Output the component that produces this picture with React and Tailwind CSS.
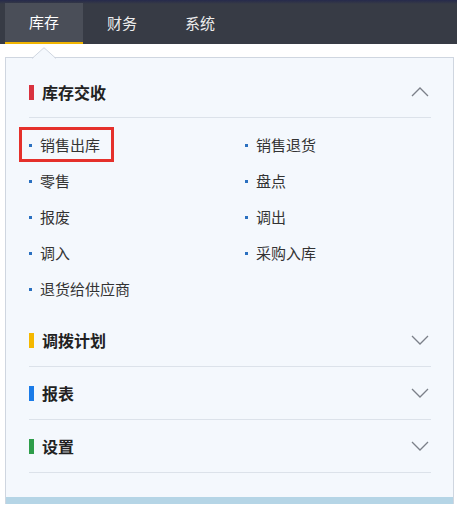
const tabs = ["库存", "财务", "系统"];

const items = [
  "销售出库",
  "销售退货",
  "零售",
  "盘点",
  "报废",
  "调出",
  "调入",
  "采购入库",
  "退货给供应商",
];

const Chevron = ({ up }) => (
  <svg width="18" height="10" viewBox="0 0 18 10" className="ml-auto mr-[2px]">
    <polyline
      points={up ? "1,9 9,1 17,9" : "1,1 9,9 17,1"}
      fill="none"
      stroke="#7b8089"
      strokeWidth="1.3"
    />
  </svg>
);

const SectionHeader = ({ title, color, up, height }) => (
  <div className={`flex items-center border-b border-[#dce2ea] ${height}`}>
    <span className={`w-[5px] h-[15px] mr-[8px] ${color}`} />
    <span className="text-[16px] font-bold text-[#222]">{title}</span>
    <Chevron up={up} />
  </div>
);

export default function App() {
  return (
    <div
      className="w-[457px] min-h-[508px] bg-white"
      style={{ fontFamily: '"Noto Sans CJK SC", "Noto Sans", sans-serif' }}
    >
      {/* TOP NAV */}
      <nav className="h-[44px] flex pl-[5px] pt-[3px] bg-[linear-gradient(to_bottom,#262a4c_0px,#373b45_4px)]">
        {tabs.map((t, i) => (
          <div
            key={t}
            className={`w-[78px] h-[41px] flex items-center justify-center text-[15px] ${
              i === 0
                ? "bg-[#4a4e58] border-b-2 border-[#f0b400] text-white"
                : "text-[#ececec]"
            }`}
          >
            {t}
          </div>
        ))}
      </nav>

      {/* DROPDOWN PANEL */}
      <div className="px-[5px] pt-[13px] pr-[3px]">
        <div className="relative border border-b-0 border-[#cfd6e0] bg-[#f4f8fd]">
          <svg
            width="24"
            height="12"
            viewBox="0 0 24 12"
            className="absolute top-[-11px] left-[26px]"
          >
            <path d="M0 12 L12 0.7 L24 12 Z" fill="#f4f8fd" />
            <polyline points="0,11.5 12,0.7 24,11.5" fill="none" stroke="#cfd6e0" strokeWidth="1" />
          </svg>

          <div className="pl-[23px] pr-[22px] pt-[9px] pb-[24px]">
            <SectionHeader title="库存交收" color="bg-[#d9323f]" up height="h-[51px]" />

            <div className="grid grid-cols-[216px_1fr] pt-[9px] pb-[7px]">
              {items.map((it, i) => (
                <div key={it} className="relative h-[36px] flex items-center text-[15px] text-[#333]">
                  {i === 0 && (
                    <span className="absolute left-[-10px] top-[0px] w-[95px] h-[35px] border-[3px] border-[#e5302b]" />
                  )}
                  <span className="w-[3px] h-[3px] bg-[#2a70c0] mr-[8px]" />
                  {it}
                </div>
              ))}
            </div>

            <SectionHeader title="调拨计划" color="bg-[#f5b800]" height="h-[53px]" />
            <SectionHeader title="报表" color="bg-[#1a7be8]" height="h-[53px]" />
            <SectionHeader title="设置" color="bg-[#2e9d4a]" height="h-[53px]" />
          </div>

          <div className="h-[7px] bg-[#b5d5e6]" />
        </div>
      </div>
    </div>
  );
}
